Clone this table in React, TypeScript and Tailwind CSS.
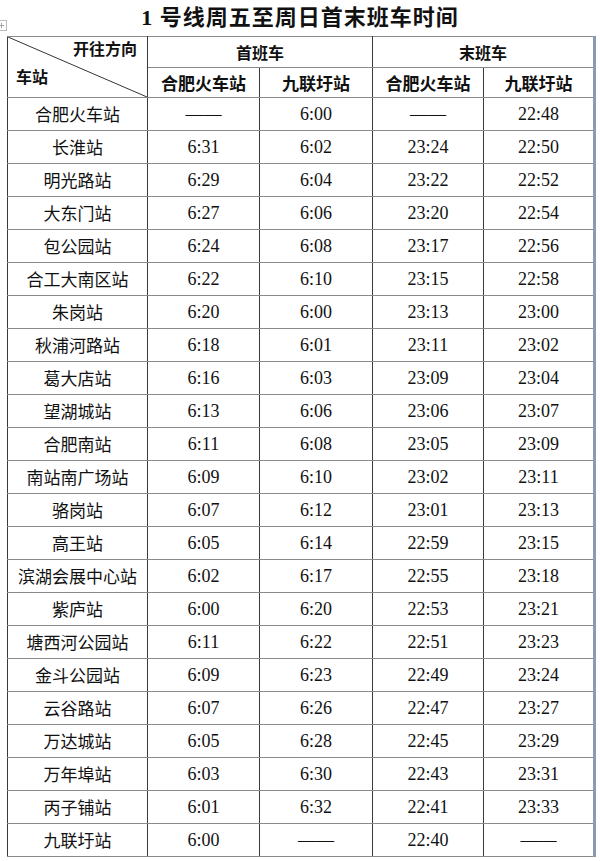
const rows: [string, string, string, string, string][] = [
  ["合肥火车站", "——", "6:00", "——", "22:48"],
  ["长淮站", "6:31", "6:02", "23:24", "22:50"],
  ["明光路站", "6:29", "6:04", "23:22", "22:52"],
  ["大东门站", "6:27", "6:06", "23:20", "22:54"],
  ["包公园站", "6:24", "6:08", "23:17", "22:56"],
  ["合工大南区站", "6:22", "6:10", "23:15", "22:58"],
  ["朱岗站", "6:20", "6:00", "23:13", "23:00"],
  ["秋浦河路站", "6:18", "6:01", "23:11", "23:02"],
  ["葛大店站", "6:16", "6:03", "23:09", "23:04"],
  ["望湖城站", "6:13", "6:06", "23:06", "23:07"],
  ["合肥南站", "6:11", "6:08", "23:05", "23:09"],
  ["南站南广场站", "6:09", "6:10", "23:02", "23:11"],
  ["骆岗站", "6:07", "6:12", "23:01", "23:13"],
  ["高王站", "6:05", "6:14", "22:59", "23:15"],
  ["滨湖会展中心站", "6:02", "6:17", "22:55", "23:18"],
  ["紫庐站", "6:00", "6:20", "22:53", "23:21"],
  ["塘西河公园站", "6:11", "6:22", "22:51", "23:23"],
  ["金斗公园站", "6:09", "6:23", "22:49", "23:24"],
  ["云谷路站", "6:07", "6:26", "22:47", "23:27"],
  ["万达城站", "6:05", "6:28", "22:45", "23:29"],
  ["万年埠站", "6:03", "6:30", "22:43", "23:31"],
  ["丙子铺站", "6:01", "6:32", "22:41", "23:33"],
  ["九联圩站", "6:00", "——", "22:40", "——"],
]

const cjk = "font-['Noto_Sans_CJK_SC',sans-serif]"
const num = "font-['Liberation_Serif','Noto_Sans_CJK_SC',serif]"
const cell = "border-x border-x-[#3a3a3a] border-y border-y-[#8a8a8a] p-0 text-center align-middle"

export default function App() {
  return (
    <div className="relative h-[861px] w-[600px] overflow-hidden bg-white text-[#111]">
      {/* table move handle */}
      <div className="absolute left-[-4px] top-[20px] h-[11px] w-[11px] border border-[#bbb] bg-white">
        <svg className="h-full w-full" viewBox="0 0 10 10">
          <path d="M5 2v6M2 5h6" stroke="#999" strokeWidth="1" />
        </svg>
      </div>

      <h1 className={`h-[36px] pt-[3px] text-center text-[22px] font-bold leading-[30px] tracking-[1px] ${num}`}>
        1 号线周五至周日首末班车时间
      </h1>

      <table className="ml-[7px] table-fixed border-collapse">
        <colgroup>
          <col className="w-[140px]" />
          <col className="w-[112px]" />
          <col className="w-[113px]" />
          <col className="w-[111px]" />
          <col className="w-[111px]" />
        </colgroup>
        <thead>
          <tr className="h-[30px]">
            <th rowSpan={2} className={`${cell} relative font-bold ${cjk}`}>
              <svg className="absolute inset-0 h-full w-full" viewBox="0 0 140 60" preserveAspectRatio="none">
                <line x1="0" y1="0" x2="140" y2="60" stroke="#333" strokeWidth="1" />
              </svg>
              <div className="flex h-[60px] flex-col justify-between pb-[10px] pl-[8px] pr-[10px] pt-0 text-[16px] leading-[22px]">
                <span className="self-end">开往方向</span>
                <span className="self-start">车站</span>
              </div>
            </th>
            <th colSpan={2} className={`${cell} text-[16px] font-bold ${cjk}`}>首班车</th>
            <th colSpan={2} className={`${cell} border-r-[3px] border-r-[#8a9ab3] text-[16px] font-bold ${cjk}`}>末班车</th>
          </tr>
          <tr className="h-[30px]">
            <th className={`${cell} text-[17px] font-bold ${cjk}`}>合肥火车站</th>
            <th className={`${cell} text-[17px] font-bold ${cjk}`}>九联圩站</th>
            <th className={`${cell} text-[17px] font-bold ${cjk}`}>合肥火车站</th>
            <th className={`${cell} border-r-[3px] border-r-[#8a9ab3] text-[17px] font-bold ${cjk}`}>九联圩站</th>
          </tr>
        </thead>
        <tbody>
          {rows.map((r) => (
            <tr key={r[0]} className="h-[33px]">
              <td className={`${cell} text-[17px] ${cjk}`}>{r[0]}</td>
              <td className={`${cell} text-[18px] ${num}`}>{r[1]}</td>
              <td className={`${cell} text-[18px] ${num}`}>{r[2]}</td>
              <td className={`${cell} text-[18px] ${num}`}>{r[3]}</td>
              <td className={`${cell} border-r-[3px] border-r-[#8a9ab3] text-[18px] ${num}`}>{r[4]}</td>
            </tr>
          ))}
        </tbody>
      </table>
    </div>
  )
}
